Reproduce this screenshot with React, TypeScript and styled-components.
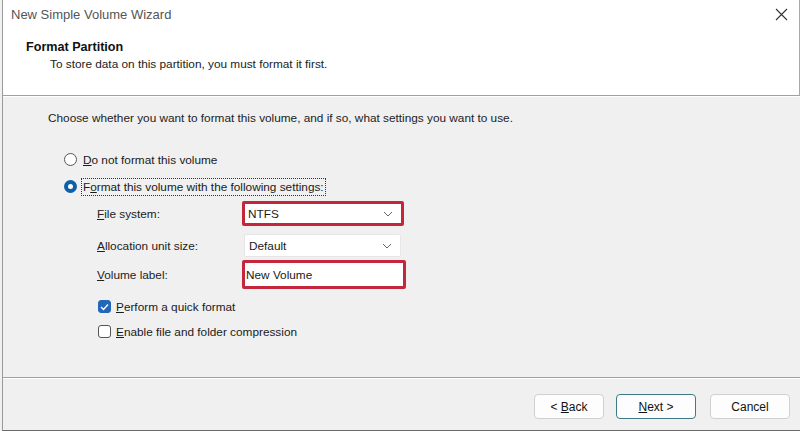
import React, { useState } from "react";
import styled, { createGlobalStyle } from "styled-components";

const GlobalStyle = createGlobalStyle`
  *, *::before, *::after {
    box-sizing: border-box;
  }
  html, body {
    margin: 0;
    padding: 0;
    background: #f0f0f0;
  }
  body {
    font-family: "Liberation Sans", Arial, sans-serif;
    font-size: 11.8px;
    color: #1a1a1a;
  }
`;

const Window = styled.div`
  width: 798px;
  height: 431px;
  margin-left: 2px;
  border-left: 1px solid #9a9a9a;
  border-bottom: 1px solid #6a6a6a;
  display: flex;
  flex-direction: column;
  background: #f0f0f0;
  overflow: hidden;
`;

const Header = styled.div`
  height: 96px;
  background: #fff;
  border-bottom: 1px solid #a0a0a0;
  border-right: 1px solid #a8a8a8;
  display: flex;
  flex-direction: column;
`;

const TitleBar = styled.div`
  height: 28px;
  display: flex;
  align-items: center;
  justify-content: space-between;
  padding: 0 10px 0 8px;
  font-size: 13px;
  color: #555;
`;

const CloseButton = styled.button`
  border: 0;
  background: transparent;
  padding: 0;
  width: 16px;
  height: 16px;
  display: flex;
  align-items: center;
  justify-content: center;
`;

const HeaderTitle = styled.div`
  margin: 12px 0 0 23px;
  font-weight: bold;
  font-size: 12.6px;
  color: #111;
`;

const HeaderSub = styled.div`
  margin: 3px 0 0 47px;
  color: #222;
`;

const Body = styled.div`
  flex: 1;
  border-top: 1px solid #fff;
  display: flex;
  flex-direction: column;
  padding: 14px 0 0 45px;
`;

const Instruction = styled.div`
  color: #222;
`;

const RadioGroup = styled.div`
  margin: 26px 0 0 16px;
  display: flex;
  flex-direction: column;
  gap: 10px;
`;

const OptionRow = styled.label`
  display: flex;
  align-items: center;
  gap: 5px;
  height: 17px;
`;

const RadioDot = styled.span<{ $checked?: boolean }>`
  width: 13px;
  height: 13px;
  border-radius: 50%;
  border: ${(p) => (p.$checked ? "4px solid #0f5fa8" : "1px solid #555")};
  background: #fff;
`;

const FocusText = styled.span<{ $focus?: boolean }>`
  padding: 1px 1px;
  outline: ${(p) => (p.$focus ? "1px dotted #333" : "none")};
`;

const Settings = styled.div`
  margin: 6px 0 0 49px;
  display: grid;
  grid-template-columns: 145px 164px;
  align-items: center;
`;

const FieldLabel = styled.div<{ $shift?: number }>`
  color: #222;
  padding-top: ${(p) => p.$shift ?? 0}px;
`;

const Combo = styled.div<{ $highlight?: boolean }>`
  height: ${(p) => (p.$highlight ? "25px" : "23px")};
  background: #fff;
  border: ${(p) => (p.$highlight ? "3px solid #c4273b" : "1px solid #e6e6e6")};
  border-radius: 2px;
  margin: ${(p) => (p.$highlight ? "0 2px 0 0" : "8px 5px 3px 2px")};
  display: flex;
  align-items: center;
  justify-content: space-between;
  padding: 0 8px 0 ${(p) => (p.$highlight ? "3px" : "4px")};
`;

const TextBox = styled.div`
  height: 29px;
  background: #fff;
  border: 3px solid #c4273b;
  border-radius: 2px;
  display: flex;
  align-items: center;
  padding-left: 1px;
`;

const CheckGroup = styled.div`
  margin: 9px 0 0 50px;
  display: flex;
  flex-direction: column;
  gap: 8px;
`;

const CheckBox = styled.span<{ $checked?: boolean }>`
  width: 13px;
  height: 13px;
  border-radius: 3px;
  border: 1px solid ${(p) => (p.$checked ? "#2267b8" : "#555")};
  background: ${(p) => (p.$checked ? "#2267b8" : "#fff")};
  display: flex;
  align-items: center;
  justify-content: center;
`;

const Footer = styled.div`
  margin-top: auto;
  margin-left: -45px;
  height: 53px;
  border-top: 1px solid #a0a0a0;
  box-shadow: inset 0 1px 0 #fff;
  display: flex;
  justify-content: flex-end;
  align-items: flex-start;
  padding: 16px 10px 0 0;
`;

const WizardButton = styled.button<{ $default?: boolean; $gap?: number }>`
  font-family: inherit;
  font-size: 12px;
  color: #111;
  width: ${(p) => (p.$default ? "80px" : "70px")};
  height: 25px;
  margin-left: ${(p) => p.$gap ?? 0}px;
  background: #fdfdfd;
  border: 1px solid ${(p) => (p.$default ? "#3d7a84" : "#d0d0d0")};
  border-radius: 4px;
  padding: 0;
`;

const CancelButton = styled(WizardButton)`
  width: 80px;
`;

const U = styled.span`
  text-decoration: underline;
`;

const Chevron = () => (
  <svg width="10" height="6" viewBox="0 0 10 6">
    <path d="M1 1l4 4 4-4" fill="none" stroke="#666" strokeWidth="1" />
  </svg>
);

export default function App() {
  const [format, setFormat] = useState(true);
  const [quick, setQuick] = useState(true);
  const [compress, setCompress] = useState(false);

  return (
    <>
      <GlobalStyle />
      <Window>
        <Header>
          <TitleBar>
            <span>New Simple Volume Wizard</span>
            <CloseButton>
              <svg width="13" height="13" viewBox="0 0 13 13">
                <path d="M1 1l11 11M12 1L1 12" stroke="#333" strokeWidth="1.1" />
              </svg>
            </CloseButton>
          </TitleBar>
          <HeaderTitle>Format Partition</HeaderTitle>
          <HeaderSub>To store data on this partition, you must format it first.</HeaderSub>
        </Header>
        <Body>
          <Instruction>
            Choose whether you want to format this volume, and if so, what settings you want to use.
          </Instruction>
          <RadioGroup>
            <OptionRow onClick={() => setFormat(false)}>
              <RadioDot $checked={!format} />
              <FocusText>
                <U>D</U>o not format this volume
              </FocusText>
            </OptionRow>
            <OptionRow onClick={() => setFormat(true)}>
              <RadioDot $checked={format} />
              <FocusText $focus>
                F<U>o</U>rmat this volume with the following settings:
              </FocusText>
            </OptionRow>
          </RadioGroup>
          <Settings>
            <FieldLabel>
              <U>F</U>ile system:
            </FieldLabel>
            <Combo $highlight>
              <span>NTFS</span>
              <Chevron />
            </Combo>
            <FieldLabel $shift={5}>
              <U>A</U>llocation unit size:
            </FieldLabel>
            <Combo>
              <span>Default</span>
              <Chevron />
            </Combo>
            <FieldLabel>
              <U>V</U>olume label:
            </FieldLabel>
            <TextBox>New Volume</TextBox>
          </Settings>
          <CheckGroup>
            <OptionRow onClick={() => setQuick(!quick)}>
              <CheckBox $checked={quick}>
                {quick && (
                  <svg width="9" height="8" viewBox="0 0 9 8">
                    <path d="M1 4l2.5 2.5L8 1.5" fill="none" stroke="#fff" strokeWidth="1.3" />
                  </svg>
                )}
              </CheckBox>
              <span>
                <U>P</U>erform a quick format
              </span>
            </OptionRow>
            <OptionRow onClick={() => setCompress(!compress)}>
              <CheckBox $checked={compress} />
              <span>
                <U>E</U>nable file and folder compression
              </span>
            </OptionRow>
          </CheckGroup>
          <Footer>
            <WizardButton>
              &lt; <U>B</U>ack
            </WizardButton>
            <WizardButton $default $gap={12}>
              <U>N</U>ext &gt;
            </WizardButton>
            <CancelButton $gap={14}>Cancel</CancelButton>
          </Footer>
        </Body>
      </Window>
    </>
  );
}
